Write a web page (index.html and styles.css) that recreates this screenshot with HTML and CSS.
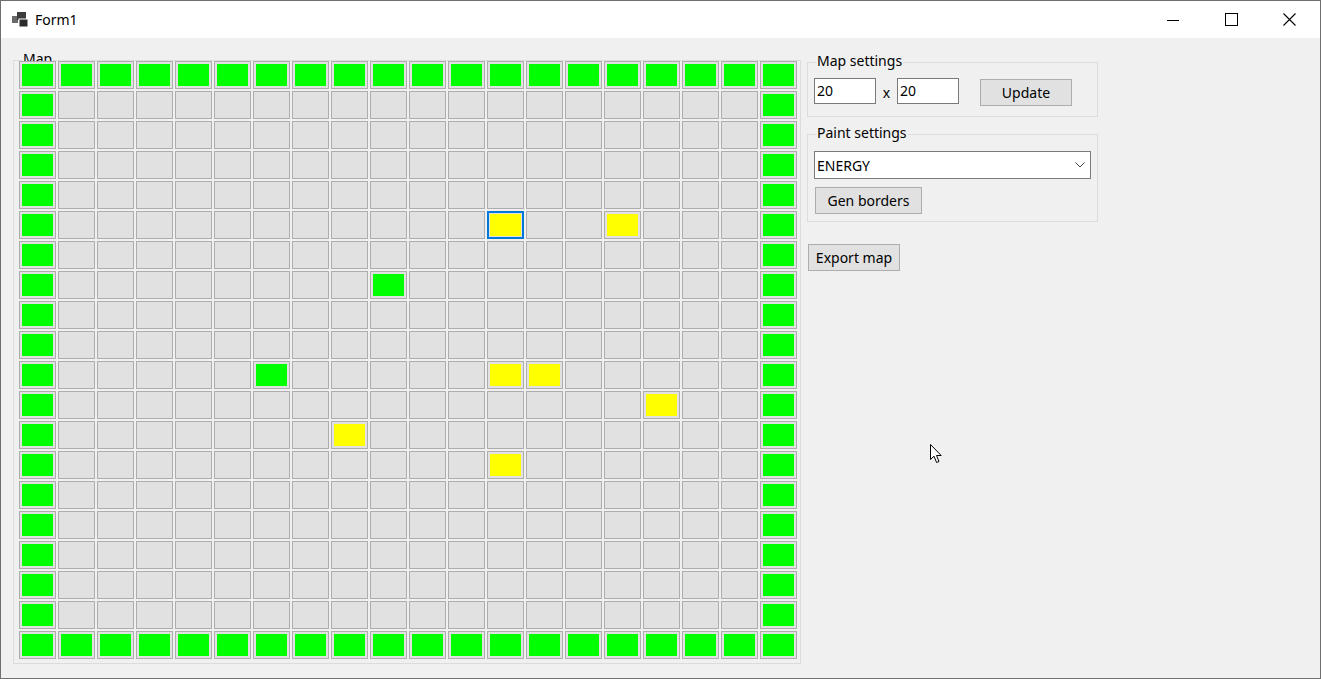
FILE: index.html
```html
<!DOCTYPE html>
<html>
<head>
<meta charset="utf-8">
<title>Form1</title>
<link rel="stylesheet" href="styles.css">
</head>
<body>
<div class="window">
  <div class="titlebar">
    <svg class="app-icon" width="16" height="15" viewBox="0 0 16 15">
      <rect x="0" y="4" width="6" height="7" fill="#6a6a6a"/>
      <rect x="5" y="0" width="9" height="8" fill="#3c3c3c"/>
      <rect x="7" y="7" width="9" height="8" fill="#2b2b2b" stroke="#ffffff" stroke-width="1"/>
    </svg>
    <span class="title">Form1</span>
    <div class="controls">
      <span class="ctl"><svg width="12" height="12" viewBox="0 0 12 12"><line x1="0" y1="6.5" x2="12" y2="6.5" stroke="#000" stroke-width="1"/></svg></span>
      <span class="ctl"><svg width="13" height="13" viewBox="0 0 13 13"><rect x="0.5" y="0.5" width="12" height="12" fill="none" stroke="#000" stroke-width="1"/></svg></span>
      <span class="ctl"><svg width="13" height="13" viewBox="0 0 13 13"><path d="M0.5 0.5 L12.5 12.5 M12.5 0.5 L0.5 12.5" stroke="#000" stroke-width="1.1" fill="none"/></svg></span>
    </div>
  </div>
  <div class="client">
    <div class="group map-group">
      <span class="group-label">Map</span>
      <div class="grid">
<span class="c g"></span><span class="c g"></span><span class="c g"></span><span class="c g"></span><span class="c g"></span><span class="c g"></span><span class="c g"></span><span class="c g"></span><span class="c g"></span><span class="c g"></span><span class="c g"></span><span class="c g"></span><span class="c g"></span><span class="c g"></span><span class="c g"></span><span class="c g"></span><span class="c g"></span><span class="c g"></span><span class="c g"></span><span class="c g"></span>
<span class="c g"></span><span class="c"></span><span class="c"></span><span class="c"></span><span class="c"></span><span class="c"></span><span class="c"></span><span class="c"></span><span class="c"></span><span class="c"></span><span class="c"></span><span class="c"></span><span class="c"></span><span class="c"></span><span class="c"></span><span class="c"></span><span class="c"></span><span class="c"></span><span class="c"></span><span class="c g"></span>
<span class="c g"></span><span class="c"></span><span class="c"></span><span class="c"></span><span class="c"></span><span class="c"></span><span class="c"></span><span class="c"></span><span class="c"></span><span class="c"></span><span class="c"></span><span class="c"></span><span class="c"></span><span class="c"></span><span class="c"></span><span class="c"></span><span class="c"></span><span class="c"></span><span class="c"></span><span class="c g"></span>
<span class="c g"></span><span class="c"></span><span class="c"></span><span class="c"></span><span class="c"></span><span class="c"></span><span class="c"></span><span class="c"></span><span class="c"></span><span class="c"></span><span class="c"></span><span class="c"></span><span class="c"></span><span class="c"></span><span class="c"></span><span class="c"></span><span class="c"></span><span class="c"></span><span class="c"></span><span class="c g"></span>
<span class="c g"></span><span class="c"></span><span class="c"></span><span class="c"></span><span class="c"></span><span class="c"></span><span class="c"></span><span class="c"></span><span class="c"></span><span class="c"></span><span class="c"></span><span class="c"></span><span class="c"></span><span class="c"></span><span class="c"></span><span class="c"></span><span class="c"></span><span class="c"></span><span class="c"></span><span class="c g"></span>
<span class="c g"></span><span class="c"></span><span class="c"></span><span class="c"></span><span class="c"></span><span class="c"></span><span class="c"></span><span class="c"></span><span class="c"></span><span class="c"></span><span class="c"></span><span class="c"></span><span class="c y sel"></span><span class="c"></span><span class="c"></span><span class="c y"></span><span class="c"></span><span class="c"></span><span class="c"></span><span class="c g"></span>
<span class="c g"></span><span class="c"></span><span class="c"></span><span class="c"></span><span class="c"></span><span class="c"></span><span class="c"></span><span class="c"></span><span class="c"></span><span class="c"></span><span class="c"></span><span class="c"></span><span class="c"></span><span class="c"></span><span class="c"></span><span class="c"></span><span class="c"></span><span class="c"></span><span class="c"></span><span class="c g"></span>
<span class="c g"></span><span class="c"></span><span class="c"></span><span class="c"></span><span class="c"></span><span class="c"></span><span class="c"></span><span class="c"></span><span class="c"></span><span class="c g"></span><span class="c"></span><span class="c"></span><span class="c"></span><span class="c"></span><span class="c"></span><span class="c"></span><span class="c"></span><span class="c"></span><span class="c"></span><span class="c g"></span>
<span class="c g"></span><span class="c"></span><span class="c"></span><span class="c"></span><span class="c"></span><span class="c"></span><span class="c"></span><span class="c"></span><span class="c"></span><span class="c"></span><span class="c"></span><span class="c"></span><span class="c"></span><span class="c"></span><span class="c"></span><span class="c"></span><span class="c"></span><span class="c"></span><span class="c"></span><span class="c g"></span>
<span class="c g"></span><span class="c"></span><span class="c"></span><span class="c"></span><span class="c"></span><span class="c"></span><span class="c"></span><span class="c"></span><span class="c"></span><span class="c"></span><span class="c"></span><span class="c"></span><span class="c"></span><span class="c"></span><span class="c"></span><span class="c"></span><span class="c"></span><span class="c"></span><span class="c"></span><span class="c g"></span>
<span class="c g"></span><span class="c"></span><span class="c"></span><span class="c"></span><span class="c"></span><span class="c"></span><span class="c g"></span><span class="c"></span><span class="c"></span><span class="c"></span><span class="c"></span><span class="c"></span><span class="c y"></span><span class="c y"></span><span class="c"></span><span class="c"></span><span class="c"></span><span class="c"></span><span class="c"></span><span class="c g"></span>
<span class="c g"></span><span class="c"></span><span class="c"></span><span class="c"></span><span class="c"></span><span class="c"></span><span class="c"></span><span class="c"></span><span class="c"></span><span class="c"></span><span class="c"></span><span class="c"></span><span class="c"></span><span class="c"></span><span class="c"></span><span class="c"></span><span class="c y"></span><span class="c"></span><span class="c"></span><span class="c g"></span>
<span class="c g"></span><span class="c"></span><span class="c"></span><span class="c"></span><span class="c"></span><span class="c"></span><span class="c"></span><span class="c"></span><span class="c y"></span><span class="c"></span><span class="c"></span><span class="c"></span><span class="c"></span><span class="c"></span><span class="c"></span><span class="c"></span><span class="c"></span><span class="c"></span><span class="c"></span><span class="c g"></span>
<span class="c g"></span><span class="c"></span><span class="c"></span><span class="c"></span><span class="c"></span><span class="c"></span><span class="c"></span><span class="c"></span><span class="c"></span><span class="c"></span><span class="c"></span><span class="c"></span><span class="c y"></span><span class="c"></span><span class="c"></span><span class="c"></span><span class="c"></span><span class="c"></span><span class="c"></span><span class="c g"></span>
<span class="c g"></span><span class="c"></span><span class="c"></span><span class="c"></span><span class="c"></span><span class="c"></span><span class="c"></span><span class="c"></span><span class="c"></span><span class="c"></span><span class="c"></span><span class="c"></span><span class="c"></span><span class="c"></span><span class="c"></span><span class="c"></span><span class="c"></span><span class="c"></span><span class="c"></span><span class="c g"></span>
<span class="c g"></span><span class="c"></span><span class="c"></span><span class="c"></span><span class="c"></span><span class="c"></span><span class="c"></span><span class="c"></span><span class="c"></span><span class="c"></span><span class="c"></span><span class="c"></span><span class="c"></span><span class="c"></span><span class="c"></span><span class="c"></span><span class="c"></span><span class="c"></span><span class="c"></span><span class="c g"></span>
<span class="c g"></span><span class="c"></span><span class="c"></span><span class="c"></span><span class="c"></span><span class="c"></span><span class="c"></span><span class="c"></span><span class="c"></span><span class="c"></span><span class="c"></span><span class="c"></span><span class="c"></span><span class="c"></span><span class="c"></span><span class="c"></span><span class="c"></span><span class="c"></span><span class="c"></span><span class="c g"></span>
<span class="c g"></span><span class="c"></span><span class="c"></span><span class="c"></span><span class="c"></span><span class="c"></span><span class="c"></span><span class="c"></span><span class="c"></span><span class="c"></span><span class="c"></span><span class="c"></span><span class="c"></span><span class="c"></span><span class="c"></span><span class="c"></span><span class="c"></span><span class="c"></span><span class="c"></span><span class="c g"></span>
<span class="c g"></span><span class="c"></span><span class="c"></span><span class="c"></span><span class="c"></span><span class="c"></span><span class="c"></span><span class="c"></span><span class="c"></span><span class="c"></span><span class="c"></span><span class="c"></span><span class="c"></span><span class="c"></span><span class="c"></span><span class="c"></span><span class="c"></span><span class="c"></span><span class="c"></span><span class="c g"></span>
<span class="c g"></span><span class="c g"></span><span class="c g"></span><span class="c g"></span><span class="c g"></span><span class="c g"></span><span class="c g"></span><span class="c g"></span><span class="c g"></span><span class="c g"></span><span class="c g"></span><span class="c g"></span><span class="c g"></span><span class="c g"></span><span class="c g"></span><span class="c g"></span><span class="c g"></span><span class="c g"></span><span class="c g"></span><span class="c g"></span>
      </div>
    </div>
    <div class="side">
      <div class="group map-settings">
        <span class="group-label">Map settings</span>
        <div class="row">
          <span class="textbox">20</span>
          <span class="times">x</span>
          <span class="textbox">20</span>
          <span class="button update">Update</span>
        </div>
      </div>
      <div class="group paint-settings">
        <span class="group-label">Paint settings</span>
        <div class="combo">
          <span class="combo-text">ENERGY</span>
          <svg class="chevron" width="10" height="6" viewBox="0 0 10 6"><path d="M0.5 0.5 L5 5 L9.5 0.5" fill="none" stroke="#444" stroke-width="1"/></svg>
        </div>
        <span class="button gen">Gen borders</span>
      </div>
      <span class="button export">Export map</span>
    </div>
  </div>
  <svg class="cursor" width="13" height="20" viewBox="0 0 13 20">
    <path d="M0.5 0.5 L0.5 15.5 L4 12.2 L6.6 18.5 L9 17.5 L6.5 11.5 L11.2 11.5 Z" fill="#fff" stroke="#000" stroke-width="1" stroke-linejoin="miter"/>
  </svg>
</div>
</body>
</html>
```
FILE: styles.css
```css
* { box-sizing: border-box; }
html, body { margin: 0; padding: 0; }
body {
  font-family: "Noto Sans", "Liberation Sans", sans-serif;
  font-size: 14px;
  color: #000;
  background: #ffffff;
}
.window {
  position: relative;
  width: 1321px;
  height: 679px;
  border: 1px solid #6f6f6f;
  display: flex;
  flex-direction: column;
  background: #f0f0f0;
  overflow: hidden;
}
.titlebar {
  height: 37px;
  flex: none;
  background: #ffffff;
  display: flex;
  align-items: center;
}
.app-icon {
  margin-left: 11px;
  margin-top: -1px;
}
.title {
  margin-left: 7px;
  font-size: 14px;
  line-height: 18px;
}
.controls {
  margin-left: auto;
  margin-right: 2px;
  display: flex;
  height: 100%;
}
.ctl {
  width: 58px;
  height: 100%;
  display: flex;
  align-items: center;
  justify-content: center;
}
.client {
  flex: 1;
  display: flex;
  align-items: flex-start;
  padding: 22px 0 0 12px;
}
.group {
  position: relative;
  border: 1px solid #dcdcdc;
}
.group-label {
  position: absolute;
  left: 8px;
  top: -11px;
  padding: 0 1px;
  background: #f0f0f0;
  line-height: 18px;
  white-space: nowrap;
}
.map-group {
  width: 788px;
  height: 604px;
  padding: 0 3px 4px 5px;
}
.grid {
  position: relative;
  display: grid;
  grid-template-columns: repeat(20, 37px);
  grid-auto-rows: 28px;
  column-gap: 2px;
  row-gap: 2px;
}
.c {
  display: block;
  border: 1px solid #adadad;
  background: #e1e1e1;
}
.c.g {
  background: #00ff00;
  box-shadow: inset 0 0 0 2px #e1e1e1;
}
.c.y {
  background: #ffff00;
  box-shadow: inset 0 0 0 2px #e1e1e1;
}
.c.sel {
  border: 2px solid #0078d7;
  box-shadow: inset 0 0 0 1px #e1e1e1;
}
.side {
  margin-left: 6px;
  margin-top: 2px;
  width: 291px;
  display: flex;
  flex-direction: column;
  align-items: flex-start;
}
.map-settings {
  width: 291px;
  height: 55px;
  padding: 15px 0 0 6px;
}
.row {
  display: flex;
  align-items: flex-start;
}
.textbox {
  width: 62px;
  height: 26px;
  border: 1px solid #7a7a7a;
  background: #ffffff;
  padding-left: 2px;
  line-height: 24px;
}
.times {
  width: 21px;
  text-align: center;
  line-height: 30px;
}
.button {
  display: flex;
  align-items: center;
  justify-content: center;
  height: 27px;
  border: 1px solid #adadad;
  background: #e1e1e1;
  white-space: nowrap;
}
.update {
  width: 92px;
  margin-left: 21px;
  margin-top: 1px;
}
.paint-settings {
  margin-top: 17px;
  width: 291px;
  height: 88px;
  padding: 16px 0 0 6px;
}
.combo {
  width: 277px;
  height: 28px;
  border: 1px solid #7a7a7a;
  background: #ffffff;
  display: flex;
  align-items: center;
  padding-left: 2px;
}
.combo-text { flex: 1; }
.chevron { margin-right: 5px; }
.gen {
  width: 107px;
  margin-left: 1px;
  margin-top: 8px;
}
.export {
  width: 92px;
  margin-left: 1px;
  margin-top: 22px;
}
.cursor {
  position: absolute;
  left: 929px;
  top: 443px;
}
```
